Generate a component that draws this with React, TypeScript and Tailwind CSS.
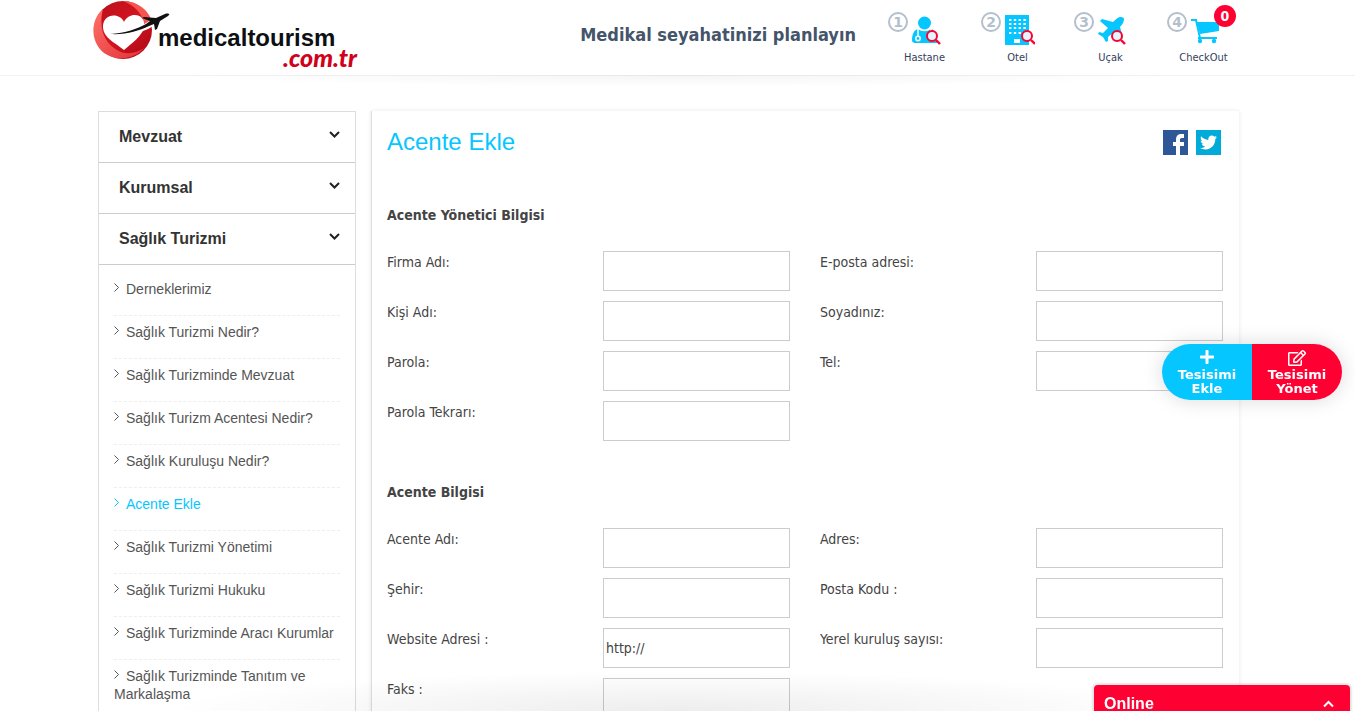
import type { ReactNode } from "react";
import { FaPlus, FaTwitter, FaRegEdit } from "react-icons/fa";

type Field = { id: string; label: string; type?: string; value?: string };

const menu = [
  "Derneklerimiz",
  "Sağlık Turizmi Nedir?",
  "Sağlık Turizminde Mevzuat",
  "Sağlık Turizm Acentesi Nedir?",
  "Sağlık Kuruluşu Nedir?",
  "Acente Ekle",
  "Sağlık Turizmi Yönetimi",
  "Sağlık Turizmi Hukuku",
  "Sağlık Turizminde Aracı Kurumlar",
  "Sağlık Turizminde Tanıtım ve Markalaşma",
];

const managerFields: Field[] = [
  { id: "firma", label: "Firma Adı:" },
  { id: "eposta", label: "E-posta adresi:", type: "email" },
  { id: "kisi", label: "Kişi Adı:" },
  { id: "soyad", label: "Soyadınız:" },
  { id: "parola", label: "Parola:", type: "password" },
  { id: "tel", label: "Tel:", type: "tel" },
  { id: "parola2", label: "Parola Tekrarı:", type: "password" },
];

const agencyFields: Field[] = [
  { id: "acente", label: "Acente Adı:" },
  { id: "adres", label: "Adres:" },
  { id: "sehir", label: "Şehir:" },
  { id: "posta", label: "Posta Kodu :" },
  { id: "website", label: "Website Adresi :", value: "http://" },
  { id: "yerel", label: "Yerel kuruluş sayısı:" },
  { id: "faks", label: "Faks :" },
];

function Logo() {
  return (
    <svg width="272" height="74" viewBox="0 0 272 74" role="img" aria-label="medicaltourism.com.tr">
      <defs>
        <linearGradient id="ring" x1="0" y1="0" x2="1" y2="1">
          <stop offset="0" stopColor="#b80f1c" />
          <stop offset="0.5" stopColor="#d3141f" />
          <stop offset="1" stopColor="#a80a14" />
        </linearGradient>
        <linearGradient id="shine" x1="0" y1="0" x2="1" y2="1">
          <stop offset="0" stopColor="#ff7068" />
          <stop offset="1" stopColor="#e2333a" />
        </linearGradient>
      </defs>
      <circle cx="30" cy="30" r="29" fill="url(#ring)" />
      <path d="M10 9C-3 20-3 42 11 53c13 9 31 6 40-5-9 6-19 7-27 2C12 43 5 29 10 9Z" fill="url(#shine)" />
      <path d="M30 1c14 0 26 9 29 21l-7 3C49 13 41 5 30 1Z" fill="#f4564f" />
      <path d="M31 22C27 12 9 13 10 28c1 10 11 14 21 22 9-8 17-13 20-22 3-15-15-17-20-6Z" fill="#fff" />
      <path d="M18 34c18 0 31-6 44-16l12-6 3 2-10 7-2 8-2 1-1-6C50 32 35 36 18 34Z" fill="#fff" stroke="#fff" strokeWidth="2" />
      <path d="M17 34c16-1 27-5 36-10l4-3-8-3 2-1 12 1 9-4c3-1 6 0 3 2l-8 5-3 8-2 1-1-6-5 2C45 31 33 35 17 34Z" fill="#111" />
      <text x="65" y="46" fontFamily="Liberation Sans, sans-serif" fontWeight="700" fontSize="24" fill="#0d0f12">
        medicaltourism
      </text>
      <text x="190" y="67" fontFamily="Lato, sans-serif" fontWeight="900" fontStyle="italic" fontSize="25" fill="#d0021b">
        .com.tr
      </text>
    </svg>
  );
}

function Lens({ x, y }: { x: number; y: number }) {
  return (
    <g transform={`translate(${x} ${y})`}>
      <circle r="5" fill="#e3f6fd" stroke="#ff0033" strokeWidth="2" />
      <path d="m4 4 4 4" stroke="#ff0033" strokeWidth="2.4" />
    </g>
  );
}

function DoctorIcon() {
  return (
    <svg width="30" height="32" viewBox="0 0 30 32" fill="#06c6ff">
      <circle cx="12.500" cy="9" r="6.500" />
      <path d="M0 26c0-6 2-10 6-11 4 3 9 3 13 0 4 1 6 5 6 9v5H3c-2 0-3-1-3-3Z" />
      <path d="M6 15v7M19 15v3" stroke="#fff" strokeWidth="1.5" fill="none" />
      <circle cx="6" cy="24.500" r="2.200" fill="none" stroke="#fff" strokeWidth="1.500" />
      <Lens x={20} y={22} />
    </svg>
  );
}

function HotelIcon() {
  return (
    <svg width="30" height="32" viewBox="0 0 30 32">
      <path d="M0 1h24v30H0Z" fill="#06c6ff" />
      {[6, 10, 14, 19].map((y) => (
        <path key={y} d={`M4 ${y}h17`} stroke="#fff" strokeWidth="2" strokeDasharray="2.4 2.4" />
      ))}
      <path d="M9 25h6v4H9Z" fill="#fff" />
      <Lens x={22} y={22} />
    </svg>
  );
}

function PlaneIcon() {
  return (
    <svg width="30" height="32" viewBox="0 0 30 32">
      <path
        d="M23 3c-3 0-5 2-8 5L4 5 2 7l8 7-5 5-4-1-1 2 5 3 3 5 2-1v-4l6-5 6 8 3-2-3-11c3-3 4-6 4-8 0-1-1-2-3-2Z"
        fill="#06c6ff"
      />
      <Lens x={19} y={22} />
    </svg>
  );
}

function CartIcon() {
  return (
    <svg width="30" height="32" viewBox="0 0 30 32">
      <path d="M0 6h5l4 18h17" fill="none" stroke="#06c6ff" strokeWidth="2" />
      <path d="M6 8h22v9L9 20Z" fill="#06c6ff" />
      <path d="M7 23h18v2H7Z" fill="#06c6ff" />
      <circle cx="9" cy="27" r="2.2" fill="#06c6ff" />
      <circle cx="23" cy="27" r="2.2" fill="#06c6ff" />
    </svg>
  );
}

function Step({ no, label, badge, children }: { no: number; label: string; badge?: string; children: ReactNode }) {
  return (
    <a href="#" className="relative flex w-[93px] flex-col pt-3">
      <span className="flex items-start gap-1 pl-[10px]">
        <span className="flex size-5 items-center justify-center rounded-full border-2 border-[#b3bfcc] font-['DejaVu_Sans'] text-sm font-bold leading-4 text-[#b3bfcc]">
          {no}
        </span>
        <span className="pt-[2px]">{children}</span>
      </span>
      <span className="pt-1 text-center text-[11px] leading-4 text-[#33415c]">{label}</span>
      {badge && (
        <span className="absolute right-[14px] top-[5px] flex size-[22px] items-center justify-center rounded-full bg-[#ff0033] text-sm font-bold text-white">
          {badge}
        </span>
      )}
    </a>
  );
}

function FieldSet({ title, fields }: { title: string; fields: Field[] }) {
  return (
    <section>
      <h2 className="mb-[26px] text-sm font-bold leading-5">{title}</h2>
      <div className="grid grid-cols-2 gap-x-[30px] gap-y-[10px]">
        {fields.map((f) => (
          <div key={f.id} className="grid grid-cols-[216fr_187fr]">
            <label htmlFor={f.id} className="text-sm leading-[22px]">
              {f.label}
            </label>
            <input
              id={f.id}
              type={f.type ?? "text"}
              defaultValue={f.value}
              className="h-10 w-full min-w-0 border border-[#ccc] bg-transparent px-[2px] text-sm"
            />
          </div>
        ))}
      </div>
    </section>
  );
}

function Chevron() {
  return (
    <svg width="11" height="7" viewBox="0 0 11 7" fill="none" stroke="#222" strokeWidth="2">
      <path d="m1 1 4.500 4.500L10 1" />
    </svg>
  );
}

export default function App() {
  return (
    <div className="min-h-screen bg-white font-['DejaVu_Sans_Condensed','DejaVu_Sans',sans-serif] text-[#444]">
      <header className="relative border-b border-[#f2f2f2]">
        <div className="mx-auto flex h-[75px] max-w-[1169px] justify-between pr-[12px]">
          <a href="#">
            <Logo />
          </a>
          <div className="flex">
            <p className="pr-[22px] pt-[23px] text-lg font-bold leading-6 text-[#44546a]">
              Medikal seyahatinizi planlayın
            </p>
            <nav className="flex">
              <Step no={1} label="Hastane">
                <DoctorIcon />
              </Step>
              <Step no={2} label="Otel">
                <HotelIcon />
              </Step>
              <Step no={3} label="Uçak">
                <PlaneIcon />
              </Step>
              <Step no={4} label="CheckOut" badge="0">
                <CartIcon />
              </Step>
            </nav>
          </div>
        </div>
        <div className="pointer-events-none absolute inset-x-[12%] top-full h-3 bg-[radial-gradient(ellipse_at_top,rgba(0,0,0,0.045),transparent_70%)]" />
      </header>

      <div className="mx-auto flex max-w-[1169px] items-start gap-[15px] pl-[5px] pr-[23px] pt-[35px]">
        <aside className="w-[258px] shrink-0 border border-[#ddd] font-['Liberation_Sans',sans-serif]">
          {["Mevzuat", "Kurumsal", "Sağlık Turizmi"].map((title) => (
            <button
              key={title}
              className="flex h-[51px] w-full justify-between border-b border-[#ccc] pl-5 pr-[15px] pt-[13px] text-base font-bold leading-6 text-[#333]"
            >
              {title}
              <span className="flex pt-[6px]">
                <Chevron />
              </span>
            </button>
          ))}
          <ul className="px-[15px] pt-2">
            {menu.map((item) => (
              <li key={item} className="border-b border-dashed border-[#eee] pb-[17px] pt-[7px]">
                <a
                  href="#"
                  className={`block text-sm leading-[18px] ${item === "Acente Ekle" ? "text-[#06c6ff]" : "text-[#555]"}`}
                >
                  <svg width="5" height="9" viewBox="0 0 5 9" className="mb-[5px] mr-[7px] inline" fill="none" stroke="currentColor">
                    <path d="m0.5 0.5 4 4-4 4" />
                  </svg>
                  {item}
                </a>
              </li>
            ))}
          </ul>
        </aside>

        <main className="min-w-0 flex-1 border-l border-[#ddd] pb-10 pl-[15px] pr-4 shadow-[0_0_4px_rgba(0,0,0,0.1)]">
          <div className="flex justify-between pr-[2px] pt-[15px]">
            <h1 className="font-['Liberation_Sans',sans-serif] text-2xl leading-8 text-[#06c6ff]">Acente Ekle</h1>
            <div className="flex gap-2 pt-1">
              <a href="#" aria-label="Facebook" className="size-[25px] bg-[#2d5796]">
                <svg width="25" height="25" viewBox="0 0 25 25" fill="#fff">
                  <path d="M13 25v-9h-3v-4h3v-2c0-4 2-6 5-6h3v4h-2c-2 0-2 1-2 2v2h4v4h-4v9Z" />
                </svg>
              </a>
              <a href="#" aria-label="Twitter" className="flex size-[25px] items-center justify-center bg-[#00aad9] text-white">
                <FaTwitter size={17} />
              </a>
            </div>
          </div>
          <form className="flex flex-col gap-[41px] pt-[47px]">
            <FieldSet title="Acente Yönetici Bilgisi" fields={managerFields} />
            <FieldSet title="Acente Bilgisi" fields={agencyFields} />
          </form>
        </main>
      </div>

      <div className="pointer-events-none fixed bottom-0 left-[12%] right-[12%] h-10 bg-[radial-gradient(ellipse_at_bottom,rgba(0,0,0,0.07),transparent_70%)]" />

      <div className="fixed right-[13px] top-[344px] flex h-14 w-[180px] overflow-hidden rounded-full text-center font-['DejaVu_Sans'] text-[13px] font-bold leading-[14px] text-white shadow-[0_0_20px_rgba(0,0,0,0.15)]">
        <button className="flex flex-1 flex-col items-center bg-[#06c6ff] px-3 pt-[5px]">
          <FaPlus size={16} className="mb-[3px] shrink-0" />
          Tesisimi Ekle
        </button>
        <button className="flex flex-1 flex-col items-center bg-[#ff0033] px-3 pt-[5px]">
          <FaRegEdit size={18} className="mb-[1px] shrink-0" />
          Tesisimi Yönet
        </button>
      </div>

      <button className="fixed bottom-[-12px] right-[5px] flex h-[38px] w-64 items-center justify-between rounded-t bg-[#ff0033] pl-[10px] pr-4 font-['Liberation_Sans',sans-serif] text-base font-bold text-white shadow-[0_0_2px_2px_rgba(0,0,0,0.1)]">
        Online
        <svg width="11" height="8" viewBox="0 0 11 8" fill="none" stroke="#fff" strokeWidth="2">
          <path d="m1 6.5 4.500-4.500 4.500 4.500" />
        </svg>
      </button>
    </div>
  );
}
